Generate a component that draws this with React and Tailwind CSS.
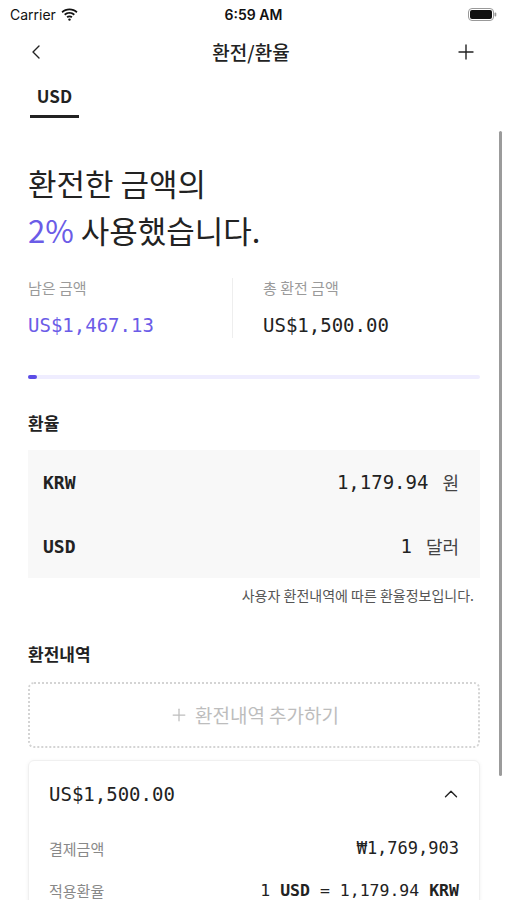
import { ChevronLeft, ChevronUp, Plus } from "lucide-react";

const mono = "font-['DejaVu_Sans_Mono','Liberation_Mono',monospace]";

const StatusBar = () => (
  <div className="h-[28px] flex items-center justify-between px-[10px] font-['Inter','Liberation_Sans',sans-serif] text-[#111]">
    <div className="flex items-center gap-[5px] w-[120px]">
      <span className="text-[14px]">Carrier</span>
      <svg width="17" height="13" viewBox="0 0 17 13">
        <path d="M8.5 2.2c2.6 0 5 1 6.8 2.7l1.2-1.3C14.4 1.6 11.6.4 8.5.4S2.6 1.6.5 3.6l1.2 1.3C3.5 3.2 5.9 2.2 8.5 2.2z" fill="#111" />
        <path d="M8.5 5.8c1.6 0 3.1.6 4.2 1.6l1.2-1.3C12.5 4.8 10.6 4 8.5 4S4.5 4.8 3.1 6.1l1.2 1.3c1.1-1 2.6-1.6 4.2-1.6z" fill="#111" />
        <path d="M8.5 9.2c.7 0 1.3.3 1.8.7l1.2-1.3c-.8-.8-1.9-1.2-3-1.2s-2.2.4-3 1.2l1.2 1.3c.5-.4 1.1-.7 1.8-.7z" fill="#111" />
        <circle cx="8.5" cy="11.6" r="1.2" fill="#111" />
      </svg>
    </div>
    <span className="text-[14px] font-semibold">6:59 AM</span>
    <div className="w-[120px] flex justify-end">
      <svg width="29" height="13" viewBox="0 0 29 13">
        <rect x="0.5" y="0.5" width="25" height="12" rx="3.5" fill="none" stroke="#999" />
        <rect x="2" y="2" width="22" height="9" rx="2" fill="#111" />
        <rect x="26.5" y="4.5" width="1.8" height="4" rx="0.9" fill="#999" />
      </svg>
    </div>
  </div>
);

const App = () => {
  return (
    <div className="relative w-full h-[900px] overflow-hidden bg-white text-[#222] font-['Noto_Sans_CJK_KR','Noto_Sans',sans-serif]">
      <StatusBar />

      {/* nav */}
      <div className="h-[48px] flex items-center justify-between pl-[24px] pr-[29px]">
        <ChevronLeft size={24} strokeWidth={1.4} className="text-[#222]" />
        <span className="text-[19px] font-medium">환전/환율</span>
        <Plus size={24} strokeWidth={1.4} className="text-[#222]" />
      </div>

      {/* tabs */}
      <div className="h-[42px] px-[30px] flex items-end">
        <div className="w-[49px] flex flex-col items-center">
          <span className="text-[17px] font-bold leading-[22px]">USD</span>
          <div className="mt-[8px] h-[3px] w-full bg-[#222]" />
        </div>
      </div>

      <div className="px-[28px] pr-[27px]">
        <h1 className="mt-[41px] text-[31px] leading-[47px] font-normal">
          환전한 금액의
          <br />
          <span className="text-[#6b5ce7]">2%</span> 사용했습니다.
        </h1>

        {/* stats */}
        <div className="mt-[25px] flex">
          <div className="w-[205px] border-r border-[#eee]">
            <div className="text-[15px] leading-[20px] text-[#9a9a9a]">남은 금액</div>
            <div className={`mt-[14px] text-[19px] leading-[26px] text-[#6b5ce7] ${mono}`}>US$1,467.13</div>
          </div>
          <div className="pl-[30px]">
            <div className="text-[15px] leading-[20px] text-[#9a9a9a]">총 환전 금액</div>
            <div className={`mt-[14px] text-[19px] leading-[26px] text-[#222] ${mono}`}>US$1,500.00</div>
          </div>
        </div>

        {/* progress */}
        <div className="mt-[37px] h-[4px] rounded-full bg-[#efedff]">
          <div className="h-full w-[9px] rounded-full bg-[#5b4ce6]" />
        </div>

        {/* rate */}
        <h2 className="mt-[32px] text-[17px] leading-[24px] font-bold">환율</h2>
        <div className="mt-[15px] bg-[#f8f8f8] pl-[15px] pr-[21px]">
          <div className="h-[64px] flex items-center justify-between">
            <span className={`text-[18px] font-bold ${mono}`}>KRW</span>
            <div className="flex items-center gap-[14px]">
              <span className={`text-[19px] ${mono}`}>1,179.94</span>
              <span className="text-[18px] text-[#444]">원</span>
            </div>
          </div>
          <div className="h-[64px] flex items-center justify-between">
            <span className={`text-[18px] font-bold ${mono}`}>USD</span>
            <div className="flex items-center gap-[14px]">
              <span className={`text-[19px] ${mono}`}>1</span>
              <span className="text-[18px] text-[#444]">달러</span>
            </div>
          </div>
        </div>
        <p className="mt-[8px] text-right pr-[6px] text-[14px] leading-[18px] text-[#555]">
          사용자 환전내역에 따른 환율정보입니다.
        </p>

        {/* history */}
        <h2 className="mt-[38px] text-[17px] leading-[24px] font-bold">환전내역</h2>
        <div className="mt-[16px] h-[66px] rounded-[6px] border-2 border-dotted border-[#d4d4d4] flex items-center justify-center gap-[6px] text-[#bdbdbd]">
          <Plus size={20} strokeWidth={1.5} />
          <span className="text-[19px]">환전내역 추가하기</span>
        </div>

        <div className="mt-[12px] rounded-[6px] border border-[#f0f0f0] shadow-[0_1px_4px_rgba(0,0,0,0.06)] px-[20px]">
          <div className="h-[66px] flex items-center justify-between">
            <span className={`text-[19px] ${mono}`}>US$1,500.00</span>
            <ChevronUp size={22} strokeWidth={1.5} className="mr-[-3px]" />
          </div>
          <div className="h-[42px] mt-[1px] flex items-center justify-between">
            <span className="text-[15px] text-[#888]">결제금액</span>
            <span className={`text-[17px] ${mono}`}>₩1,769,903</span>
          </div>
          <div className="h-[42px] flex items-center justify-between">
            <span className="text-[15px] text-[#888]">적용환율</span>
            <span className={`text-[16.5px] ${mono}`}>
              1 <b>USD</b> = 1,179.94 <b>KRW</b>
            </span>
          </div>
          <div className="h-[40px]" />
        </div>
      </div>

      {/* scroll indicator */}
      <div className="absolute left-[499px] top-[131px] w-[3px] h-[645px] rounded-full bg-[#9b9b9b]" />
    </div>
  );
};

export default App;
